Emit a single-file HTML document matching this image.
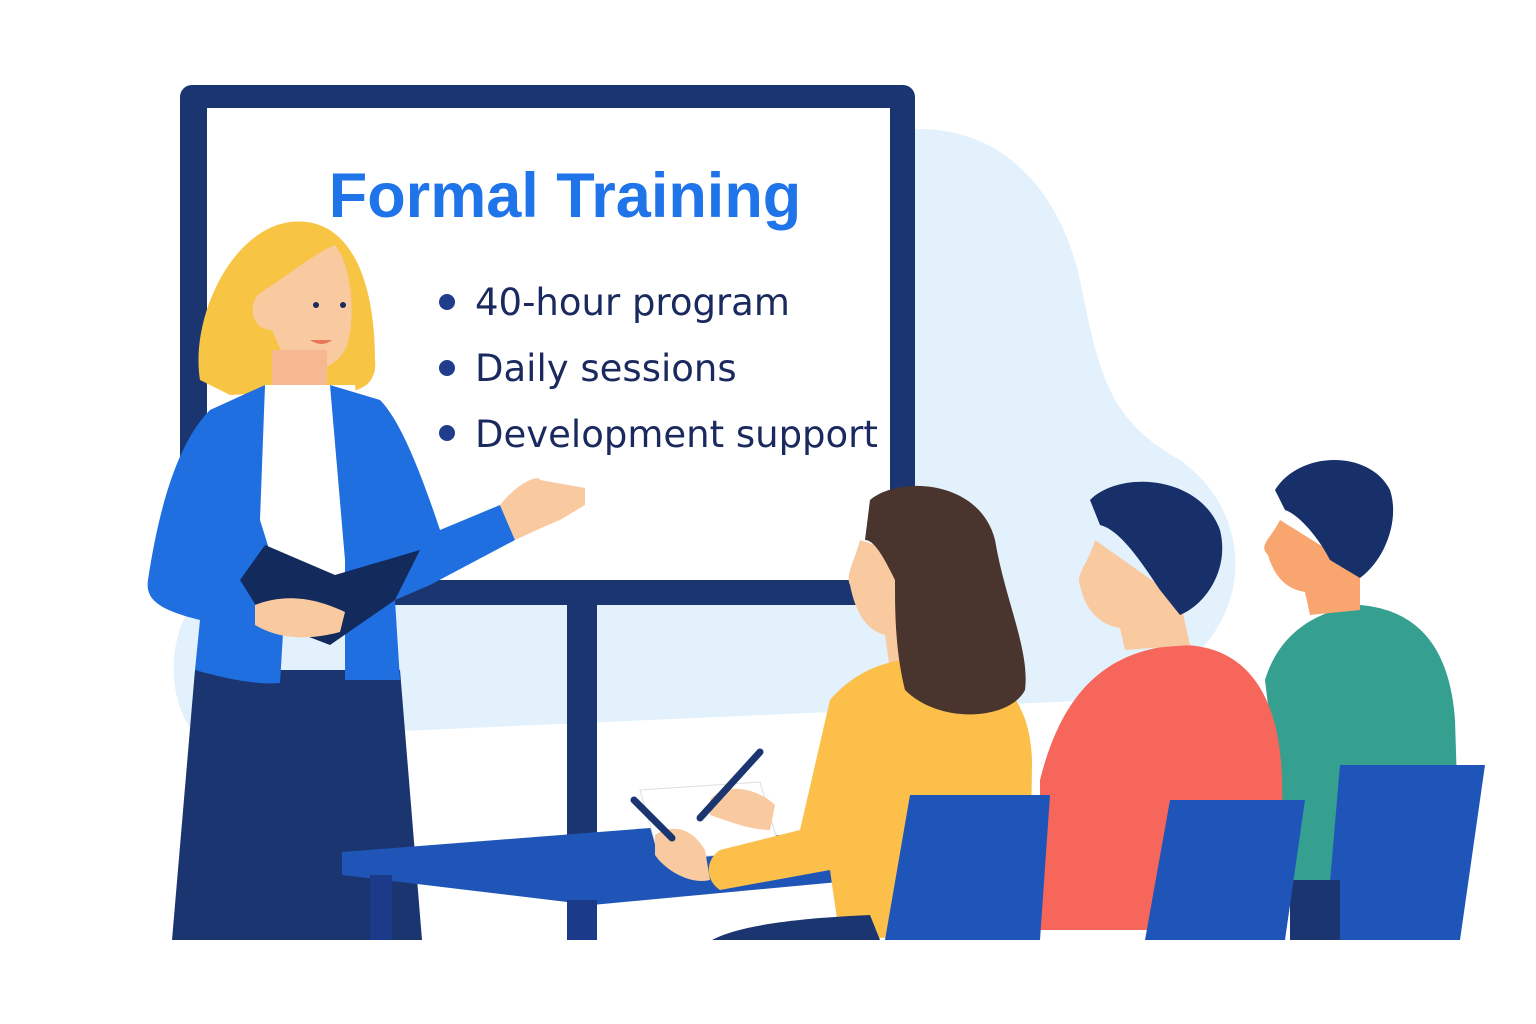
<!DOCTYPE html>
<html><head><meta charset="utf-8"><style>
html,body{margin:0;padding:0;background:#fff;width:1536px;height:1024px;overflow:hidden}
svg{display:block}
</style></head><body>
<svg width="1536" height="1024" viewBox="0 0 1536 1024" xmlns="http://www.w3.org/2000/svg">
<rect width="1536" height="1024" fill="#fff"/>
<path d="M900 130 C1000 120 1060 190 1080 280 C1100 380 1110 420 1180 460 C1250 510 1250 600 1200 650 L1100 700 L200 740 C160 700 170 620 200 600 L300 500 L600 300 Z" fill="#e2f1fc"/>
<rect x="180" y="85" width="735" height="520" rx="12" fill="#1a3570"/>
<rect x="207" y="108" width="683" height="472" fill="#fff"/>
<rect x="567" y="605" width="30" height="335" fill="#1a3570"/>
<text x="565" y="217" text-anchor="middle" font-family="Liberation Sans, sans-serif" font-weight="bold" font-size="63" fill="#1e74e8">Formal Training</text>
<g font-family="DejaVu Sans, Liberation Sans, sans-serif" font-size="37" fill="#1a2a5e">
<circle cx="447" cy="302" r="8" fill="#1f3d8a"/><text x="475" y="315">40-hour program</text>
<circle cx="447" cy="368" r="8" fill="#1f3d8a"/><text x="475" y="381">Daily sessions</text>
<circle cx="447" cy="433" r="8" fill="#1f3d8a"/><text x="475" y="447">Development support</text>
</g>
<path d="M200 380 C190 320 230 230 290 222 C350 215 375 280 375 360 C378 390 350 395 330 390 L230 395 Z" fill="#f8c444"/>
<path d="M265 290 C280 280 320 250 335 245 C355 270 355 330 345 350 C330 375 300 375 285 360 L272 330 C250 330 245 300 265 290 Z" fill="#f9c9a0"/>
<rect x="272" y="350" width="55" height="60" fill="#f6b890"/>
<circle cx="316" cy="305" r="3" fill="#1a2a5e"/><circle cx="343" cy="305" r="3" fill="#1a2a5e"/>
<path d="M310 340 Q322 348 332 340 Z" fill="#e9775a"/>
<path d="M172 940 L195 670 L400 670 L422 940 Z" fill="#1b3570"/>
<path d="M265 385 L355 385 L370 560 L260 580 Z" fill="#fff"/>
<path d="M265 385 L210 410 C180 440 160 500 148 580 C145 600 160 610 200 620 L195 670 C230 680 260 685 280 683 L285 600 L260 520 Z" fill="#1f6fe0"/>
<path d="M330 385 L380 400 C400 420 420 470 440 530 L500 505 L515 540 L430 585 L395 600 L400 680 L345 680 L345 560 Z" fill="#1f6fe0"/>
<path d="M500 505 C520 480 540 475 540 480 L585 488 L585 505 L560 520 C540 528 520 538 515 540 Z" fill="#f9c9a0"/>
<path d="M240 580 L265 545 L335 575 L420 550 L395 600 L330 645 L265 620 Z" fill="#132a5c"/>
<path d="M255 605 C280 595 310 595 345 612 L340 632 C310 640 280 640 255 625 Z" fill="#f9c9a0"/>
<path d="M342 852 L650 828 L860 840 L860 880 L592 905 L342 875 Z" fill="#2055b8"/>
<rect x="370" y="875" width="22" height="65" fill="#1b3a8a"/>
<rect x="567" y="900" width="30" height="40" fill="#1b3a8a"/>
<path d="M640 790 L760 782 L780 850 L660 860 Z" fill="#fff" stroke="#ddd"/>
<path d="M1265 680 C1280 630 1320 610 1360 605 C1420 610 1450 650 1455 720 L1460 880 L1290 890 Z" fill="#36a090"/>
<path d="M1280 520 C1270 540 1258 545 1268 555 C1275 580 1290 590 1305 592 L1310 615 L1360 610 L1360 570 Z" fill="#f8a570"/>
<path d="M1275 490 C1300 450 1370 450 1390 490 C1400 520 1385 560 1360 578 L1330 560 C1320 540 1300 515 1285 510 Z" fill="#17306a"/>
<path d="M1340 765 L1485 765 L1460 940 L1325 940 Z" fill="#1f55b8"/>
<rect x="1290" y="880" width="50" height="60" fill="#1b3570"/>
<path d="M1040 780 C1060 700 1100 650 1180 645 C1250 645 1280 700 1282 780 L1285 930 L1040 930 Z" fill="#f7665a"/>
<path d="M1095 540 C1090 560 1075 575 1080 585 C1085 610 1100 625 1120 628 L1125 650 L1190 645 L1180 600 Z" fill="#f9c9a0"/>
<path d="M1090 500 C1120 470 1200 475 1220 530 C1230 570 1205 605 1180 615 L1160 590 C1140 560 1120 530 1100 525 Z" fill="#17306a"/>
<path d="M1170 800 L1305 800 L1285 940 L1145 940 Z" fill="#1f55b8"/>
<path d="M860 540 C855 560 845 575 850 585 C855 610 865 630 885 635 L890 670 L940 660 L920 560 Z" fill="#f9c9a0"/>
<path d="M830 700 C860 665 900 655 940 660 C1000 665 1030 700 1032 760 L1030 930 L840 940 L830 870 L720 890 C705 880 705 860 720 850 L800 830 Z" fill="#fbbf4a"/>
<path d="M870 500 C900 475 980 480 995 540 C1005 600 1030 650 1025 690 C1010 720 940 725 905 690 C895 650 895 610 895 580 C885 560 875 540 865 540 Z" fill="#4a342e"/>
<path d="M655 835 C670 825 690 825 705 850 L710 880 C690 885 665 870 655 855 Z" fill="#f9c9a0"/>
<path d="M710 800 C725 780 760 790 775 805 L770 830 C750 830 725 820 710 815 Z" fill="#f9c9a0"/>
<line x1="700" y1="818" x2="760" y2="752" stroke="#1b3570" stroke-width="7" stroke-linecap="round"/>
<line x1="634" y1="800" x2="672" y2="838" stroke="#1b3570" stroke-width="7" stroke-linecap="round"/>
<path d="M910 795 L1050 795 L1040 940 L885 940 Z" fill="#1f55b8"/>
<path d="M712 940 C740 925 800 918 870 915 L880 940 Z" fill="#1b3570"/>
</svg>
</body></html>
